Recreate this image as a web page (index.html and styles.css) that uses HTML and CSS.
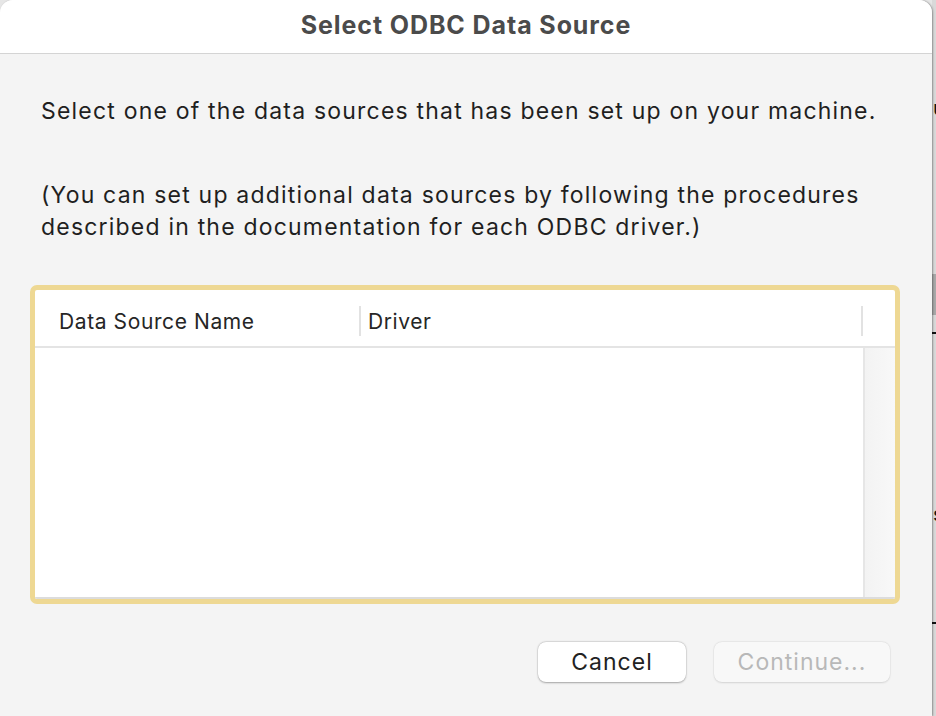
FILE: index.html
```html
<!DOCTYPE html>
<html>
<head>
<meta charset="utf-8">
<link rel="stylesheet" href="styles.css">
</head>
<body>
<div class="screen">
  <div class="window">
    <div class="titlebar">Select ODBC Data Source</div>
    <div class="content">
      <p class="intro">Select one of the data sources that has been set up on your machine.</p>
      <p class="note">(You can set up additional data sources by following the procedures described in the documentation for each ODBC driver.)</p>
      <div class="ring">
        <div class="table">
          <div class="thead">
            <div class="th th-name">Data Source Name</div>
            <div class="th th-driver">Driver</div>
            <div class="th th-corner"></div>
          </div>
          <div class="tbody">
            <div class="rows"></div>
            <div class="scroller"></div>
          </div>
        </div>
      </div>
      <div class="buttons">
        <button class="btn btn-cancel">Cancel</button>
        <button class="btn btn-continue" disabled>Continue...</button>
      </div>
    </div>
  </div>
  <div class="behind">
    <span class="frag frag-u">u</span>
    <span class="frag-block"></span>
    <span class="frag-line frag-line1"></span>
    <span class="frag frag-s">s</span>
    <span class="frag-line frag-line2"></span>
  </div>
</div>
</body>
</html>
```

FILE: styles.css
```css
html, body {
  margin: 0;
  padding: 0;
  background: #e6e6e6;
}
body {
  font-family: "Inter", "Liberation Sans", Arial, sans-serif;
  -webkit-font-smoothing: antialiased;
}
.screen {
  width: 936px;
  height: 716px;
  display: flex;
  overflow: hidden;
}
.window {
  width: 932px;
  flex: none;
  background: #f4f4f4;
  border-radius: 13px 13px 0 0;
  box-shadow: 1px 0 2px rgba(0,0,0,0.35);
  overflow: hidden;
  display: flex;
  flex-direction: column;
  position: relative;
  z-index: 1;
}
.titlebar {
  height: 54px;
  background: #ffffff;
  border-bottom: 1px solid #d4d4d4;
  display: flex;
  align-items: center;
  justify-content: center;
  font-weight: 700;
  font-size: 25px;
  color: #4b4b4b;
  letter-spacing: 0.9px;
  padding-bottom: 3px;
  box-sizing: border-box;
}
.content {
  padding: 0 42px 0 30px;
  display: flex;
  flex-direction: column;
}
.intro, .note {
  margin: 0;
  padding-left: 11px;
  font-size: 23px;
  line-height: 32px;
  color: #1f1f1f;
  letter-spacing: 1.2px;
}
.intro {
  margin-top: 41px;
}
.note {
  margin-top: 52px;
}
.ring {
  margin-top: 42px;
  width: 870px;
  height: 319px;
  box-sizing: border-box;
  border: 5px solid #eed893;
  border-radius: 7px;
  background: #ffffff;
  overflow: hidden;
}
.table {
  height: 100%;
  display: flex;
  flex-direction: column;
  border-bottom: 2px solid #dcdcdc;
  box-sizing: border-box;
}
.thead {
  height: 58px;
  flex: none;
  display: flex;
  align-items: flex-start;
  padding-top: 16px;
  border-bottom: 2px solid #e4e4e4;
  box-sizing: border-box;
  font-size: 21px;
  letter-spacing: 0.6px;
  color: #262626;
}
.th {
  height: 30px;
  display: flex;
  align-items: center;
  box-sizing: border-box;
}
.th-name {
  width: 326px;
  padding-left: 24px;
  border-right: 2px solid #e2e2e2;
}
.th-driver {
  width: 502px;
  padding-left: 7px;
  border-right: 2px solid #e2e2e2;
}
.th-corner {
  flex: 1;
}
.tbody {
  flex: 1;
  display: flex;
}
.rows {
  width: 828px;
  border-right: 2px solid #e6e6e6;
}
.scroller {
  flex: 1;
  background: linear-gradient(to right, #f3f3f3, #f8f8f8);
}
.buttons {
  margin-top: 38px;
  display: flex;
  justify-content: flex-end;
  gap: 28px;
}
.btn {
  height: 40px;
  border-radius: 8px;
  font-family: "Inter", "Liberation Sans", Arial, sans-serif;
  font-size: 23px;
  letter-spacing: 1px;
  padding: 0;
  border: none;
}
.btn-cancel {
  width: 148px;
  background: #ffffff;
  color: #222222;
  box-shadow: 0 0.5px 2px rgba(0,0,0,0.3), 0 0 0 0.5px rgba(0,0,0,0.08);
}
.btn-continue {
  width: 176px;
  background: #f8f8f8;
  color: #b8b8b8;
  box-shadow: 0 0.5px 2px rgba(0,0,0,0.12), 0 0 0 0.5px rgba(0,0,0,0.04);
}
.behind {
  flex: 1;
  background: #d9d9d9;
  position: relative;
  overflow: hidden;
}
.frag {
  position: absolute;
  left: 1px;
  font-size: 20px;
  color: #111;
  font-family: "Inter", "Liberation Sans", sans-serif;
}
.frag-u { top: 96px; }
.frag-s { top: 502px; }
.frag-block {
  position: absolute;
  left: 0;
  top: 274px;
  width: 4px;
  height: 41px;
  background: #a8a8a8;
}
.frag-line {
  position: absolute;
  left: 0;
  width: 4px;
  height: 2px;
  background: #111;
}
.frag-line1 { top: 332px; }
.frag-line2 { top: 622px; }
```
